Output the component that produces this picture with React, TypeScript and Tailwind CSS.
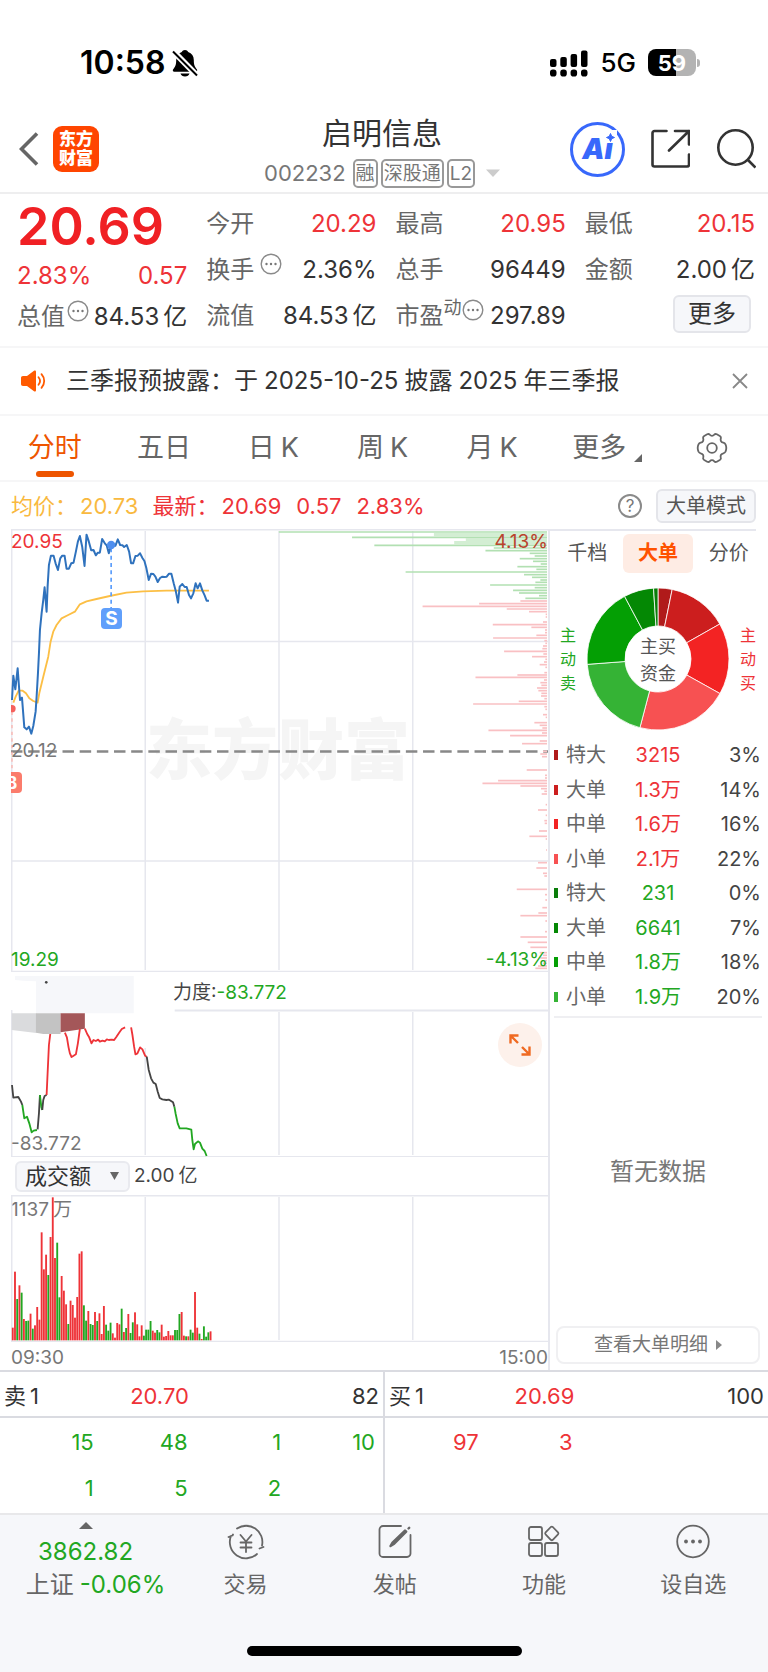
import React from "react";

const RED = "#ee3338";
const GREEN = "#22a722";
const GRID = "#e6e7ee";

/* ---------- chart data, measured in thirds of a pixel ---------- */

const priceLine =
  "36,900 40,827 46,868 53,805 60,900 66,893 73,982 80,988 87,980 94,1001 100,978 107,935 110,890 114,820 117,760 120,690 125,640 130,600 134,562 140,635 143,560 147,495 153,467 161,467 167,490 174,510 181,475 187,467 194,467 200,506 207,506 214,490 221,488 228,455 234,425 240,408 247,440 254,498 260,404 267,425 274,451 281,450 288,466 294,458 300,458 307,417 315,430 321,437 327,460 333,436 340,438 347,437 354,418 361,435 368,436 373,441 381,435 388,455 394,490 400,490 407,468 414,467 421,460 428,474 434,483 440,505 447,540 454,521 461,522 467,530 474,546 481,534 488,530 494,531 501,530 508,521 515,521 522,550 528,572 535,608 540,560 548,552 555,561 561,561 568,585 574,595 581,580 588,550 594,565 601,550 608,571 615,586 621,602 628,602";

const averageLine =
  "40,908 47,890 56,872 68,872 78,880 88,895 100,903 113,908 118,880 130,830 145,770 152,725 160,695 170,675 185,655 205,645 225,635 240,613 260,604 290,597 330,588 380,578 430,574 500,572 628,572";

const depthGreen: [number, number][] = [
  [396, 806], [412, 586], [436, 519], [444, 160], [452, 185], [460, 52], [468, 37], [476, 82], [484, 42],
  [492, 19], [500, 89], [508, 32], [516, 425], [524, 69], [532, 45], [540, 20], [547, 35], [555, 171],
  [563, 37], [571, 102], [579, 84], [587, 24], [595, 65],
];

const depthWide: [number, number][] = [[404, 340], [420, 244], [428, 279]];

const depthRed: [number, number][] = [
  [603, 80], [611, 204], [619, 374], [627, 121], [635, 54], [643, 4], [651, 4], [666, 12], [674, 163], [682, 47],
  [690, 6], [698, 6], [706, 32], [714, 162], [722, 8], [730, 5], [738, 12], [746, 14], [754, 129], [762, 11],
  [770, 45], [778, 5], [786, 9], [794, 22], [802, 5], [818, 8], [825, 89], [832, 215], [840, 9], [848, 20],
  [856, 17], [864, 30], [872, 26], [880, 17], [888, 18], [896, 8], [904, 85], [912, 222], [920, 8], [928, 5],
  [944, 12], [952, 4], [968, 38], [976, 22], [984, 14], [991, 176], [999, 15], [1007, 111], [1023, 22],
  [1031, 75], [1054, 12], [1062, 20], [1070, 15], [1110, 61], [1126, 6], [1134, 6], [1142, 147], [1150, 194],
  [1158, 80], [1166, 18], [1174, 8], [1182, 16], [1214, 4], [1230, 27], [1246, 4], [1262, 8], [1270, 7],
  [1293, 24], [1309, 53], [1317, 4], [1350, 3], [1388, 27], [1404, 32], [1420, 12], [1428, 8], [1468, 91],
  [1484, 6], [1500, 5], [1523, 14], [1539, 26], [1547, 80], [1563, 5], [1595, 6], [1611, 80], [1627, 58],
  [1642, 50], [1658, 22], [1666, 12], [1674, 20], [1682, 8], [1690, 12], [1698, 27], [1705, 35],
];

const forceSegments: [string, string][] = [
  ["#444", "36,375 40,413 55,411 63,425 67,435"],
  [GREEN, "67,435 73,475 81,470 88,490 95,517 101,512 111,510"],
  ["#444", "113,508 117,460 120,405"],
  [GREEN, "120,405 124,440 127,450"],
  ["#444", "127,450 130,420 134,408 140,405"],
  [RED, "140,405 143,340 147,255 151,222"],
  [RED, "195,218 201,232 206,262 210,280 215,291 220,288 228,283 234,250 240,207"],
  [RED, "255,206 262,222 268,232 275,250 281,240 288,243 295,239 300,245 308,242 315,244 321,238 327,240 335,239 343,240 350,230 358,218 366,207 376,202"],
  [RED, "394,202 398,225 403,260 407,283 413,280 421,262 428,268 436,287 441,290"],
  ["#444", "441,290 447,330 454,355 461,368 468,372 474,395 480,414 488,418 500,420 508,419 520,427 524,440"],
  [GREEN, "524,440 528,462 534,490 540,505 560,505 575,509 578,540 582,568 586,552 595,544 601,548 608,566 615,573 621,588"],
];

const volumes =
  "r38 r206 g124 r165 g143 r64 g58 g59 r80 g35 r45 r100 r62 r324 r213 r257 g196 r310 r429 r247 g293 g129 r193 r149 r108 g49 r119 r106 r68 r130 r260 r267 g105 g59 r88 g49 g46 r85 g58 r81 r19 r103 g47 g29 g53 r21 r8 r52 r48 g95 r25 g37 r79 g22 g54 r84 r48 r12 r45 g14 g32 g32 g58 r29 r23 g31 g24 r47 r11 r13 r28 r15 r15 g31 g31 g79 r85 r14 g12 r12 g32 g23 r145 r38 g20 r4 g42 g11 g24 r27".split(" ");

const slices: [number, number, string][] = [
  [0, 3.2, "#b01a1a"],
  [3.2, 16.8, "#cc1e1e"],
  [16.8, 33.1, "#f32323"],
  [33.1, 54.1, "#f75152"],
  [54.1, 73.8, "#35b335"],
  [73.8, 92.2, "#049f04"],
  [92.2, 99, "#048804"],
  [99, 100, "#0a7d0a"],
];

function slicePath(from: number, to: number) {
  const point = (r: number, p: number) => {
    const a = (p / 100) * Math.PI * 2;
    return `${(71 + r * Math.sin(a)).toFixed(2)} ${(71 - r * Math.cos(a)).toFixed(2)}`;
  };
  return `M${point(71, from)}A71 71 0 0 1 ${point(71, to)}L${point(33, to)}A33 33 0 0 0 ${point(33, from)}Z`;
}

const orders = [
  { name: "特大", value: "3215", pct: "3%", mark: "bg-[#b01a1a]", tone: "text-[#ee3338]" },
  { name: "大单", value: "1.3万", pct: "14%", mark: "bg-[#cc1e1e]", tone: "text-[#ee3338]" },
  { name: "中单", value: "1.6万", pct: "16%", mark: "bg-[#f32323]", tone: "text-[#ee3338]" },
  { name: "小单", value: "2.1万", pct: "22%", mark: "bg-[#f75152]", tone: "text-[#ee3338]" },
  { name: "特大", value: "231", pct: "0%", mark: "bg-[#0a7d0a]", tone: "text-[#22a722]" },
  { name: "大单", value: "6641", pct: "7%", mark: "bg-[#048804]", tone: "text-[#22a722]" },
  { name: "中单", value: "1.8万", pct: "18%", mark: "bg-[#049f04]", tone: "text-[#22a722]" },
  { name: "小单", value: "1.9万", pct: "20%", mark: "bg-[#35b335]", tone: "text-[#22a722]" },
];

/* ---------- small parts ---------- */

/* Sets a small gap between Latin and Chinese runs, which are separated by "|". */
function Mixed({ text, wide }: { text: string; wide?: boolean }) {
  return (
    <span className={wide ? "inline-flex gap-[6px]" : "inline-flex gap-1"}>
      {text.split("|").map((run, i) => (
        <span key={i}>{run}</span>
      ))}
    </span>
  );
}

function InfoDots() {
  return (
    <svg viewBox="0 0 22 22" className="mb-3 size-[22px] shrink-0" fill="none">
      <circle cx="11" cy="11" r="9.8" stroke="#8a8a8a" strokeWidth="1.4" />
      <g fill="#777">
        <circle cx="6.5" cy="11" r="1.2" />
        <circle cx="11" cy="11" r="1.2" />
        <circle cx="15.5" cy="11" r="1.2" />
      </g>
    </svg>
  );
}

function Quote({ label, value, red, extra }: { label: string; value: string; red?: boolean; extra?: React.ReactNode }) {
  return (
    <div className="flex h-[46px] items-center justify-between whitespace-nowrap">
      <span className="flex items-center text-[#666]">
        {label}
        {extra}
      </span>
      <span className={red ? "text-[#ee3338]" : "text-[#333]"}>
        <Mixed text={value} />
      </span>
    </div>
  );
}

function GridLines({ height, rows, tops }: { height: number; rows: number[]; tops: number[] }) {
  return (
    <g stroke={GRID} strokeWidth="1.5">
      <path d={`M.75 0V${height}`} />
      {[134.5, 268.5, 402.5].map((x, i) => (
        <path key={x} d={`M${x} ${tops[i]}V${height - 2}`} />
      ))}
      {rows.map((y) => (
        <path key={y} d={`M0 ${y}H538`} />
      ))}
    </g>
  );
}

/* ---------- sections ---------- */

function StatusBar() {
  return (
    <div className="flex h-[100px] items-center justify-between pt-[25px] pr-[68px] pl-[80px] text-black">
      <div className="flex items-center gap-[7px]">
        <span className="text-[32px] leading-8 font-semibold">10:58</span>
        <svg viewBox="0 0 26 28" className="h-7 w-[26px]">
          <path d="M13 1c1.500 0 2.700.8 3.200 2.100 3.600 1.300 5.600 4.200 5.600 8 0 5.500 1.200 7 3 9.200.8 1 .3 2.500-1.100 2.500H2.300c-1.400 0-1.900-1.500-1.100-2.500 1.800-2.200 3-3.700 3-9.200 0-3.800 2-6.700 5.600-8C10.300 1.800 11.500 1 13 1Z" />
          <path d="M8.500 24.500h9c-.5 1.900-2.300 3-4.500 3s-4-1.100-4.500-3Z" />
          <path d="M.5 1.500 25.500 27" stroke="#fff" strokeWidth="6" />
          <path d="M1 2.500 25 26.500" stroke="#000" strokeWidth="2" />
        </svg>
      </div>
      <div className="flex items-center">
        <svg viewBox="0 0 38 28" className="h-7 w-[38px]">
          <rect x="0" y="10" width="6.500" height="8" rx="2" />
          <rect x="10.300" y="8" width="6.500" height="10" rx="2" />
          <rect x="20.600" y="5" width="6.500" height="13" rx="2" />
          <rect x="31" y="1.500" width="6.500" height="16.500" rx="2" />
          <rect x="0" y="20.500" width="6.500" height="7" rx="2.800" />
          <rect x="10.300" y="20.500" width="6.500" height="7" rx="2.800" />
          <rect x="20.600" y="20.500" width="6.500" height="7" rx="2.800" />
          <rect x="31" y="20.500" width="6.500" height="7" rx="2.800" />
        </svg>
        <span className="ml-3 text-[26px] leading-8 font-medium">5G</span>
        <div className="ml-3 flex h-[27px] w-12 items-center justify-center rounded-lg bg-[linear-gradient(90deg,#000_58%,#b3b3b3_58%)] text-[22px] leading-6 font-bold text-white">
          59
        </div>
        <span className="ml-px h-2 w-[3px] rounded-r-full bg-[#b3b3b3]" />
      </div>
    </div>
  );
}

function Header() {
  return (
    <header className="grid h-[94px] grid-cols-[1fr_auto_1fr] items-center border-b-2 border-[#eeeeef] pt-[6px]">
      <div className="flex items-center gap-[14px] pl-[19px]">
        <button aria-label="返回">
          <svg viewBox="0 0 20 34" className="h-[34px] w-5" fill="none" stroke="#666" strokeWidth="3.600">
            <path d="M18 1.500 2.500 17 18 32.500" />
          </svg>
        </button>
        <div className="flex size-[46px] flex-col items-center justify-center rounded-[9px] bg-[#ff4500] text-[17px] leading-[19px] font-black text-white">
          <span>东方</span>
          <span>财富</span>
        </div>
      </div>
      <div className="flex flex-col items-center pt-1 pr-1">
        <h1 className="text-[30px] leading-9 text-[#333]">启明信息</h1>
        <button className="mt-2 flex items-center gap-[3px] text-[19px] leading-[25px] text-[#777]">
          <span className="mr-1 text-[22px]">002232</span>
          <span className="rounded-[5px] border-2 border-[#999] px-px">融</span>
          <span className="rounded-[5px] border-2 border-[#999] px-px">深股通</span>
          <span className="rounded-[5px] border-2 border-[#999] px-px">L2</span>
          <svg viewBox="0 0 14 8" className="ml-2 h-2 w-[14px]" fill="#ccc">
            <path d="M0 .5h14L7 8Z" />
          </svg>
        </button>
      </div>
      <div className="flex items-center justify-end pr-3">
        <button aria-label="Ai" className="relative mr-[25px] flex size-[55px] items-center justify-center rounded-full border-[3px] border-[#3868fb] text-[28px] leading-8 font-black text-[#3868fb] italic">
          Ai
          <svg viewBox="0 0 13 13" className="absolute top-[5px] right-[5px] size-[13px]">
            <rect width="13" height="13" fill="#fff" />
            <path d="M6.500 3.500 7.700 6.300 10.500 7.500 7.700 8.700 6.500 11.500 5.300 8.700 2.500 7.500 5.300 6.300Z" fill="#3868fb" stroke="#3868fb" strokeLinejoin="round" />
          </svg>
        </button>
        <button aria-label="分享" className="mr-[26px]">
          <svg viewBox="0 0 40 40" className="size-10" fill="none" stroke="#333" strokeWidth="2.600" strokeLinecap="round" strokeLinejoin="round">
            <path d="M16.500 2H4.500a2 2 0 0 0-2 2v31.500a2 2 0 0 0 2 2H37a2 2 0 0 0 2-2V25.500M25 2h14v13.500M39 2 19 21.500" />
          </svg>
        </button>
        <button aria-label="搜索">
          <svg viewBox="0 0 40 40" className="size-10" fill="none" stroke="#333" strokeWidth="2.600">
            <circle cx="19.500" cy="18.500" r="17.200" />
            <path d="m31.500 30.500 8 8" />
          </svg>
        </button>
      </div>
    </header>
  );
}

function QuotePanel() {
  return (
    <section className="grid h-[154px] grid-cols-4 gap-x-[19px] border-b-2 border-[#f6f6f7] pt-[7px] pr-[13px] pl-[17px] text-[24px] leading-8">
      <div>
        <p className="flex h-[52px] items-center text-[52px] leading-[52px] font-semibold text-[#f02024]">20.69</p>
        <div className="flex h-[46px] items-center justify-between text-[#ee3338]">
          <span>2.83%</span>
          <span>0.57</span>
        </div>
        <div className="flex h-9 items-center justify-between whitespace-nowrap">
          <span className="flex items-center gap-[2px] text-[#666]">
            总值
            <InfoDots />
          </span>
          <span className="text-[#333]">
            <Mixed text="84.53|亿" />
          </span>
        </div>
      </div>
      <div>
        <Quote label="今开" value="20.29" red />
        <Quote label="换手" value="2.36%" extra={<span className="ml-[6px] flex"><InfoDots /></span>} />
        <Quote label="流值" value="84.53|亿" />
      </div>
      <div>
        <Quote label="最高" value="20.95" red />
        <Quote label="总手" value="96449" />
        <Quote
          label="市盈"
          value="297.89"
          extra={
            <>
              <span className="mb-4 text-[18px] leading-6">动</span>
              <InfoDots />
            </>
          }
        />
      </div>
      <div>
        <Quote label="最低" value="20.15" red />
        <Quote label="金额" value="2.00|亿" />
        <div className="flex h-[42px] items-center justify-end pr-1">
          <button className="rounded-md border-2 border-[#e4e5ea] bg-[#f6f7fa] px-[13px] text-[24px] leading-[34px] text-[#333]">更多</button>
        </div>
      </div>
    </section>
  );
}

function Notice() {
  return (
    <section className="flex h-[68px] items-center border-b-2 border-[#f6f6f7] pr-5 pl-5">
      <svg viewBox="0 0 26 22" className="h-[22px] w-[26px]" fill="#ff5a00">
        <path d="M3 6h4l7-5.200c1-.6 2-.2 2 1v18.400c0 1.200-1 1.600-2 1L7 16H3c-1.300 0-2-.8-2-2V8c0-1.200.7-2 2-2Z" />
        <g fill="none" stroke="#ff5a00" strokeWidth="1.800" strokeLinecap="round">
          <path d="M18.500 7.200c1.800 2.200 1.800 5.400 0 7.600M21.500 4.200c3.600 4 3.600 9.600 0 13.600" />
        </g>
      </svg>
      <p className="ml-5 flex-1 text-[24px] leading-8 whitespace-nowrap text-[#333]">
        <Mixed wide text="三季报预披露：于|2025-10-25|披露|2025|年三季报" />
      </p>
      <button aria-label="关闭">
        <svg viewBox="0 0 16 16" className="size-4" stroke="#888" strokeWidth="1.800">
          <path d="m1 1 14 14M15 1 1 15" />
        </svg>
      </button>
    </section>
  );
}

function PeriodTabs() {
  return (
    <nav className="flex h-[66px] border-b-2 border-[#f6f6f7] text-[27px] leading-9 text-[#666]">
      {["分时", "五日", "日|K", "周|K", "月|K", "更多"].map((tab, i) => (
        <button key={tab} className={i === 0 ? "flex flex-1 flex-col items-center pt-[14px] text-[#ee5500]" : "flex flex-1 flex-col items-center pt-[14px]"}>
          {i === 5 ? (
            <span className="flex items-end gap-2 pl-3">
              更多
              <svg viewBox="0 0 8 8" className="mb-1 size-2" fill="#666">
                <path d="M8 0v8H0Z" />
              </svg>
            </span>
          ) : (
            <Mixed wide text={tab} />
          )}
          {i === 0 && <span className="mt-[5px] h-[6px] w-[38px] rounded-full bg-[#ee5500]" />}
        </button>
      ))}
      <button aria-label="设置" className="flex w-[112px] items-center justify-center">
        <svg viewBox="0 0 32 32" className="size-8" fill="none" stroke="#666" strokeWidth="1.800" strokeLinejoin="round">
          <path d="M11.200 2.300c1-.5 1.900-.3 2.500.4 1.400 1.500 3.200 1.500 4.600 0 .6-.7 1.500-.9 2.500-.4l3 1.700c1 .6 1.300 1.400 1 2.400-.6 2.200.4 3.800 2.500 4.300 1.100.3 1.800.9 2.200 1.700.9 2 .9 5.200 0 7.200-.4.800-1.100 1.400-2.200 1.700-2.100.5-3.100 2.100-2.500 4.300.3 1 0 1.800-1 2.400l-3 1.700c-1 .5-1.900.3-2.500-.4-1.400-1.500-3.200-1.500-4.600 0-.6.7-1.500.9-2.500.4l-3-1.700c-1-.6-1.300-1.400-1-2.400.6-2.200-.4-3.800-2.500-4.300-1.100-.3-1.800-.9-2.200-1.700-.9-2-.9-5.200 0-7.200.4-.8 1.100-1.400 2.200-1.700 2.100-.5 3.100-2.100 2.500-4.300-.3-1 0-1.800 1-2.400Z" />
          <circle cx="16" cy="16" r="4.800" />
        </svg>
      </button>
    </nav>
  );
}

function InfoRow() {
  return (
    <section className="flex h-[47px] items-center pr-3 pl-[11px] text-[22px] leading-8 whitespace-nowrap text-[#ee3338]">
      <span className="text-[#f9b93f]">均价：</span>
      <span className="ml-[3px] text-[#f9b93f]">20.73</span>
      <span className="ml-[14px]">最新：</span>
      <span className="ml-[3px]">20.69</span>
      <span className="ml-[15px]">0.57</span>
      <span className="ml-[15px]">2.83%</span>
      <button aria-label="帮助" className="ml-auto flex size-6 items-center justify-center rounded-full border-2 border-[#8a8a8a] text-[17px] leading-5 text-[#777]">
        ?
      </button>
      <button className="ml-[14px] rounded-md border-2 border-[#e4e5ea] bg-[#f6f7fa] px-2 text-[20px] leading-[30px] text-[#555]">大单模式</button>
    </section>
  );
}

function PriceChart() {
  return (
    <div className="relative h-[443px] overflow-hidden text-[19px] leading-6">
      <span className="absolute top-[176px] left-[135px] text-[66px] leading-[90px] font-black whitespace-nowrap text-[#f5f5f5]">东方财富</span>
      <svg viewBox="0 0 538 443" preserveAspectRatio="none" className="absolute inset-0 size-full" fill="none">
        <GridLines height={443} rows={[0.75, 112.5, 332, 442.5]} tops={[2, 2, 2]} />
        <path d="M0 222.500H538" stroke="#888" strokeWidth="2.400" strokeDasharray="11.500 5.700" />
        <g transform="translate(537 -129) scale(.33333)">
          {depthWide.map(([y, w]) => (
            <path key={y} d={`M${-w} ${y}H0`} stroke="#d3eed3" strokeWidth="10" />
          ))}
          {depthGreen.map(([y, w]) => (
            <path key={y} d={`M${-w} ${y}H0`} stroke="#b2e0b2" strokeWidth="5" />
          ))}
          {depthRed.map(([y, w]) => (
            <path key={y} d={`M${-w} ${y}H0`} stroke="#f9c0c3" strokeWidth="5" />
          ))}
        </g>
        <g transform="translate(-11 -129) scale(.33333)" strokeLinejoin="round">
          <polyline points={averageLine} stroke="#fcbf45" strokeWidth="5.500" />
          <path d="M334 445V624" stroke="#5a9dfb" strokeWidth="5" strokeDasharray="12 10" />
          <path d="M36 935V1115" stroke="#fbb4ae" strokeWidth="4" strokeDasharray="10 10" />
          <polyline points={priceLine} stroke="#2f72bd" strokeWidth="6" />
          <circle cx="334" cy="435" r="12.500" fill="#4f8fef" />
          <circle cx="36" cy="926" r="11" fill="#f5605c" />
        </g>
      </svg>
      <span className="absolute top-[79px] left-[90px] flex size-[21px] items-center justify-center rounded bg-[#609ffb] text-[19px] leading-5 font-bold text-white">S</span>
      <span className="absolute top-[243px] -left-[10px] flex size-[21px] items-center justify-center rounded bg-[#fb7c6c] text-[17px] leading-5 font-bold text-white">B</span>
      <span className="absolute top-px left-0 text-[#ee3338]">20.95</span>
      <span className="absolute top-px right-0 text-[#b9432c]">4.13%</span>
      <span className="absolute top-[210px] left-0 text-[#777]">20.12</span>
      <span className="absolute bottom-0 left-0 text-[#22a722]">19.29</span>
      <span className="absolute right-0 bottom-0 text-[#22a722]">-4.13%</span>
    </div>
  );
}

function ForceChart() {
  return (
    <div className="relative h-[185px] text-[19px] leading-6">
      <svg viewBox="0 0 538 185" preserveAspectRatio="none" className="absolute inset-0 size-full" fill="none">
        <g stroke={GRID} strokeWidth="1.500">
          <path d="M.75 38V185M134.500 76V183M268.500 40V183M402.500 40V183" />
          <path d="M164 38.500H538M0 185H538" strokeWidth="2" />
        </g>
        <g transform="translate(-11 -12) scale(.33333)">
          <path d="M45 48H402V160H108V64Q60 62 45 60Z" fill="#f6f7fa" />
          <circle cx="139" cy="67" r="4" fill="#444" />
          <path d="M35 160H109V219L60 213 35 210Z" fill="#dadbdd" />
          <path d="M108 160H182V222H130L108 218Z" fill="#c3c3c3" />
          <path d="M182 160H255V206L182 217Z" fill="#a45759" />
          {forceSegments.map(([color, points]) => (
            <polyline key={points} points={points} stroke={color} strokeWidth="5.500" strokeLinejoin="round" />
          ))}
        </g>
      </svg>
      <p className="absolute top-[7px] left-[162px] leading-7 text-[#444]">
        力度:<span className="text-[#22a722]">-83.772</span>
      </p>
      <span className="absolute bottom-px left-0 text-[#777]">-83.772</span>
      <button aria-label="展开" className="absolute top-[51px] right-[6px] flex size-11 items-center justify-center rounded-full bg-[#fdf1eb]">
        <svg viewBox="0 0 22 22" className="size-[22px]" fill="none" stroke="#ef6a22" strokeWidth="2.400">
          <path d="M1.500 9.500v-8h8M1.500 1.500l7.500 7.500M20.500 12.500v8h-8M20.500 20.500 13 13" />
        </svg>
      </button>
    </div>
  );
}

function VolumeChart() {
  return (
    <>
      <div className="flex h-[38px] items-center pl-1">
        <label className="relative flex items-center">
          <select aria-label="指标" defaultValue="a" className="h-[31px] w-[115px] appearance-none rounded-md border-2 border-[#e9eaef] bg-[#f6f7fa] pl-2 text-[22px] leading-[27px] text-[#333]">
            <option value="a">成交额</option>
          </select>
          <svg viewBox="0 0 9 8" className="pointer-events-none absolute right-[11px] h-2 w-[9px]" fill="#666">
            <path d="M0 0h9L4.500 8Z" />
          </svg>
        </label>
        <span className="ml-1 text-[19px] leading-7 text-[#444]">
          <Mixed text="2.00|亿" />
        </span>
      </div>
      <div className="relative h-[147px] text-[19px] leading-6">
        <span className="absolute top-[3px] left-0 text-[#777]">
          <Mixed text="1137|万" />
        </span>
        <svg viewBox="0 0 538 147" preserveAspectRatio="none" className="absolute inset-0 size-full">
          <GridLines height={147} rows={[0.75, 146.5]} tops={[2, 2, 2]} />
          <g transform="translate(-11 -235) scale(.33333)">
            {volumes.map((v, i) => {
              const h = Number(v.slice(1));
              return <rect key={i} x={35.5 + i * 6.68} y={1141 - h} width="5.600" height={h} fill={v[0] === "r" ? RED : GREEN} />;
            })}
          </g>
        </svg>
      </div>
      <div className="flex h-7 items-center justify-between pt-[3px] text-[19px] leading-6 text-[#777]">
        <span>09:30</span>
        <span>15:00</span>
      </div>
    </>
  );
}

function SidePanel() {
  return (
    <aside className="flex w-[218px] flex-col pr-[2px]">
      <div className="mr-[10px] h-[2px] bg-[#e6e7ee]" />
      <div className="mx-[2px] mt-[3px] grid grid-cols-3 text-[20px] leading-[39px] text-[#555]">
        <button>千档</button>
        <button className="rounded-md bg-[#feece4] font-bold text-[#ff5200]">大单</button>
        <button>分价</button>
      </div>
      <div className="mt-[15px] flex items-center justify-between px-[10px] text-[16px] leading-6">
        <p className="w-4 text-[#22a722]">主动卖</p>
        <div className="relative size-[142px]">
          <svg viewBox="0 0 142 142" className="size-full">
            {slices.map(([from, to, color]) => (
              <path key={from} d={slicePath(from, to)} fill={color} stroke="#fff" strokeOpacity=".8" />
            ))}
          </svg>
          <p className="absolute inset-0 flex flex-col items-center justify-center pt-[2px] text-[18px] leading-[27px] text-[#555]">
            <span>主买</span>
            <span>资金</span>
          </p>
        </div>
        <p className="w-4 text-[#ee3338]">主动买</p>
      </div>
      <table className="mt-2 h-[276px] w-full text-[20px] leading-7">
        <tbody>
          {orders.map((o, i) => (
            <tr key={i}>
              <td className="w-[69px] p-0 pl-1 text-[#666]">
                <span className="flex items-center gap-2">
                  <span className={`h-[10px] w-1 ${o.mark}`} />
                  {o.name}
                </span>
              </td>
              <td className={`p-0 text-center ${o.tone}`}>{o.value}</td>
              <td className="w-[69px] p-0 pr-[5px] text-right text-[#444]">{o.pct}</td>
            </tr>
          ))}
        </tbody>
      </table>
      <div className="mx-1 mt-[2px] h-[2px] bg-[#efeff2]" />
      <p className="flex flex-1 items-center justify-center text-[24px] leading-8 text-[#777]">暂无数据</p>
      <a href="#detail" className="mx-[6px] mb-[6px] flex h-[38px] items-center justify-center gap-2 rounded-lg border-2 border-[#f0f0f2] text-[19px] leading-7 text-[#777]">
        查看大单明细
        <svg viewBox="0 0 6 10" className="h-[10px] w-[6px]" fill="#888">
          <path d="M0 0 6 5 0 10Z" />
        </svg>
      </a>
    </aside>
  );
}

function OrderSide({ label, price, count, queue, tone }: { label: string; price: string; count: string; queue: string[]; tone: string }) {
  return (
    <div className="flex-1 odd:border-r-2 odd:border-[#dadbe1]">
      <div className="grid h-[46px] grid-cols-[1fr_auto_1fr] items-center border-b-2 border-[#dadbe1] px-1 pt-[3px] text-[#333]">
        <span className="flex gap-1">
          {label}
          <span>1</span>
        </span>
        <span className="pr-16 text-[#ee3338]">{price}</span>
        <span className="text-right">{count}</span>
      </div>
      <div className={`grid h-[95px] grid-cols-4 content-start pt-px pr-2 text-right leading-[46px] ${tone}`}>
        {queue.map((n, i) => (
          <span key={i}>{n}</span>
        ))}
      </div>
    </div>
  );
}

function BottomNav() {
  return (
    <footer className="flex h-[159px] flex-col border-t-2 border-[#e8e8ea] bg-[#f6f7fa] text-[#666]">
      <nav className="flex">
        <button className="flex w-[171px] flex-col items-center pt-[7px] text-[24px] leading-[33px]">
          <svg viewBox="0 0 14 7" className="mb-[6px] h-[7px] w-[14px]" fill="#666">
            <path d="M7 0 14 7H0Z" />
          </svg>
          <span className="text-[#22a722]">3862.82</span>
          <span className="flex gap-[6px] pl-5 whitespace-nowrap">
            上证<span className="text-[#22a722]">-0.06%</span>
          </span>
        </button>
        <button className="flex flex-1 flex-col items-center pt-[9px] text-[22px] leading-8">
          <svg viewBox="0 0 38 36" className="mb-2 h-9 w-[38px]" fill="none" stroke="#666" strokeWidth="1.800" strokeLinecap="round" strokeLinejoin="round">
            <path d="M10 4.600A16.200 16.200 0 0 1 35 21.500M30 30A16.200 16.200 0 0 1 4 12M1.500 13l4-1.500.5-1M36.500 23l-4 1.500M13.500 11l5.500 6.500L24.500 11M13.500 18.500h11M13.500 23.500h11M19 17.500V28" />
          </svg>
          交易
        </button>
        <button className="flex flex-1 flex-col items-center pt-[9px] text-[22px] leading-8">
          <svg viewBox="0 0 36 36" className="mb-2 size-9" fill="none" stroke="#666" strokeWidth="1.800" strokeLinecap="round" strokeLinejoin="round">
            <path d="M24 2H6a3.500 3.500 0 0 0-3.500 3.500v24A3.500 3.500 0 0 0 6 33h24a3.500 3.500 0 0 0 3.500-3.500V11" />
            <path d="M13.500 22 15.500 18.500 28 6.500l1.200 1.200-12 12ZM31.500 4.500l.7-.7" strokeWidth="2.400" fill="#666" />
          </svg>
          发帖
        </button>
        <button className="flex flex-1 flex-col items-center pt-[9px] text-[22px] leading-8">
          <svg viewBox="0 0 36 36" className="mb-2 size-9" fill="none" stroke="#666" strokeWidth="1.800" strokeLinejoin="round">
            <rect x="3" y="3" width="13" height="13" rx="2" />
            <rect x="3" y="19" width="13" height="13" rx="2" />
            <rect x="19" y="19" width="13" height="13" rx="2" />
            <path d="M24.800 3q1-.8 2 0l5.200 5.400q.9 1 0 2l-5.200 5.400q-1 .8-2 0l-5.200-5.400q-.9-1 0-2Z" />
          </svg>
          功能
        </button>
        <button className="flex flex-1 flex-col items-center pt-[9px] text-[22px] leading-8">
          <svg viewBox="0 0 36 36" className="mb-2 size-9" fill="none">
            <circle cx="18" cy="17.500" r="15.800" stroke="#666" strokeWidth="1.800" />
            <g fill="#666">
              <circle cx="11" cy="17.500" r="1.900" />
              <circle cx="18" cy="17.500" r="1.900" />
              <circle cx="25" cy="17.500" r="1.900" />
            </g>
          </svg>
          设自选
        </button>
      </nav>
      <div className="mx-auto mt-auto mb-4 h-[10px] w-[275px] rounded-full bg-black" />
    </footer>
  );
}

export default function App() {
  return (
    <div className="min-h-screen w-full bg-white font-['Inter','Noto_Sans_CJK_SC',sans-serif]">
      <StatusBar />
      <Header />
      <QuotePanel />
      <Notice />
      <PeriodTabs />
      <InfoRow />
      <main className="flex border-b-2 border-[#dadbe1]">
        <div className="ml-[11px] flex-1 border-r-2 border-[#e6e7ee]">
          <PriceChart />
          <ForceChart />
          <VolumeChart />
        </div>
        <SidePanel />
      </main>
      <section className="flex text-[22px] leading-8">
        <OrderSide label="卖" price="20.70" count="82" queue={["15", "48", "1", "10", "1", "5", "2"]} tone="text-[#22a722]" />
        <OrderSide label="买" price="20.69" count="100" queue={["97", "3"]} tone="text-[#ee3338]" />
      </section>
      <BottomNav />
    </div>
  );
}
